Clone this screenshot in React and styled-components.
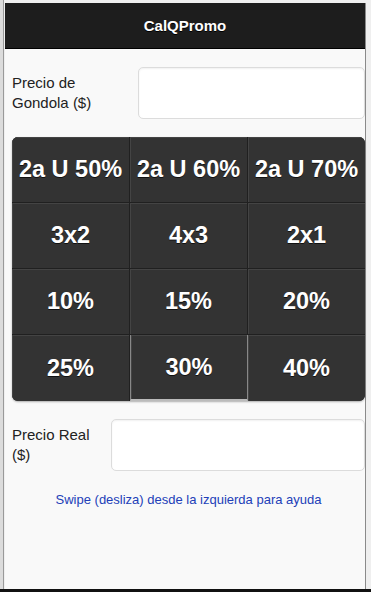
import React from 'react';
import styled, { createGlobalStyle } from 'styled-components';

const Global = createGlobalStyle`
  html, body { margin: 0; padding: 0; }
  body {
    background: #e4e4e4;
    font-family: "Liberation Sans", Arial, sans-serif;
  }
`;

const buttons = [
  '2a U 50%', '2a U 60%', '2a U 70%',
  '3x2', '4x3', '2x1',
  '10%', '15%', '20%',
  '25%', '30%', '40%',
];

const App = () => {
  return (
    <>
      <Global />
      <Frame>
        <Page>
          <Header>CalQPromo</Header>
          <Content>
            <Field labelWidth="126px">
              <Label>Precio de<br />Gondola ($)</Label>
              <Input type="text" />
            </Field>

            <Grid>
              {buttons.map((b, i) => (
                <Cell key={b} active={i === 10}>{b}</Cell>
              ))}
            </Grid>

            <Field labelWidth="99px">
              <Label>Precio Real<br />($)</Label>
              <Input type="text" />
            </Field>

            <Help>Swipe (desliza) desde la izquierda para ayuda</Help>
          </Content>
        </Page>
      </Frame>
    </>
  );
};

const Frame = styled.div`
  height: 592px;
  padding: 3px 5px 0 5px;
  box-sizing: border-box;
  background: linear-gradient(to right, #dcdcdc 0, #dcdcdc 3px, #9a9a9a 3px, #9a9a9a 4px, #efefef 4px);
  border-bottom: 3px solid #111;
`;

const Page = styled.div`
  height: 100%;
  background: #f9f9f9;
  border-right: 1px solid #8a8a8a;
  display: flex;
  flex-direction: column;
`;

const Header = styled.div`
  height: 45px;
  background: #1d1d1d;
  border-bottom: 1px solid #000;
  color: #fff;
  font-weight: bold;
  font-size: 15px;
  display: flex;
  align-items: center;
  justify-content: center;
  text-shadow: 0 1px 0 #000;
`;

const Content = styled.div`
  padding: 18px 0 0 7px;
  display: flex;
  flex-direction: column;
`;

const Field = styled.div`
  display: grid;
  grid-template-columns: ${p => p.labelWidth} 1fr;
  align-items: center;
  height: 52px;
`;

const Label = styled.div`
  font-size: 15px;
  line-height: 20px;
  color: #222;
`;

const Input = styled.input`
  height: 52px;
  box-sizing: border-box;
  border: 1px solid #dcdcdc;
  border-radius: 5px;
  background: #fff;
  box-shadow: inset 0 1px 2px rgba(0,0,0,0.06);
  outline: none;
`;

const Grid = styled.div`
  margin: 18px 0 18px 0;
  display: grid;
  grid-template-columns: 118px 118px 1fr;
  grid-auto-rows: 66px;
  border-radius: 6px;
  overflow: hidden;
  background: #2a2a2a;
  box-shadow: 0 1px 2px rgba(0,0,0,0.3);
`;

const Cell = styled.div`
  background: #333;
  border-right: 1px solid #202020;
  border-bottom: 1px solid #202020;
  box-shadow: inset 1px 1px 0 #444;
  ${p => p.active && `
    border-left: 1px solid #888;
    border-right: 1px solid #888;
  `}
  &:nth-child(3n) { border-right: none; }
  &:nth-last-child(-n + 3) { border-bottom: ${p => (p.active ? '2px solid #bbb' : 'none')}; }
  color: #fff;
  font-weight: bold;
  font-size: 23.5px;
  display: flex;
  align-items: center;
  justify-content: center;
  text-shadow: 0 1px 0 #111;
  white-space: nowrap;
`;

const Help = styled.div`
  margin-top: 21px;
  text-align: center;
  font-size: 13px;
  color: #2240b8;
`;

export default App;
